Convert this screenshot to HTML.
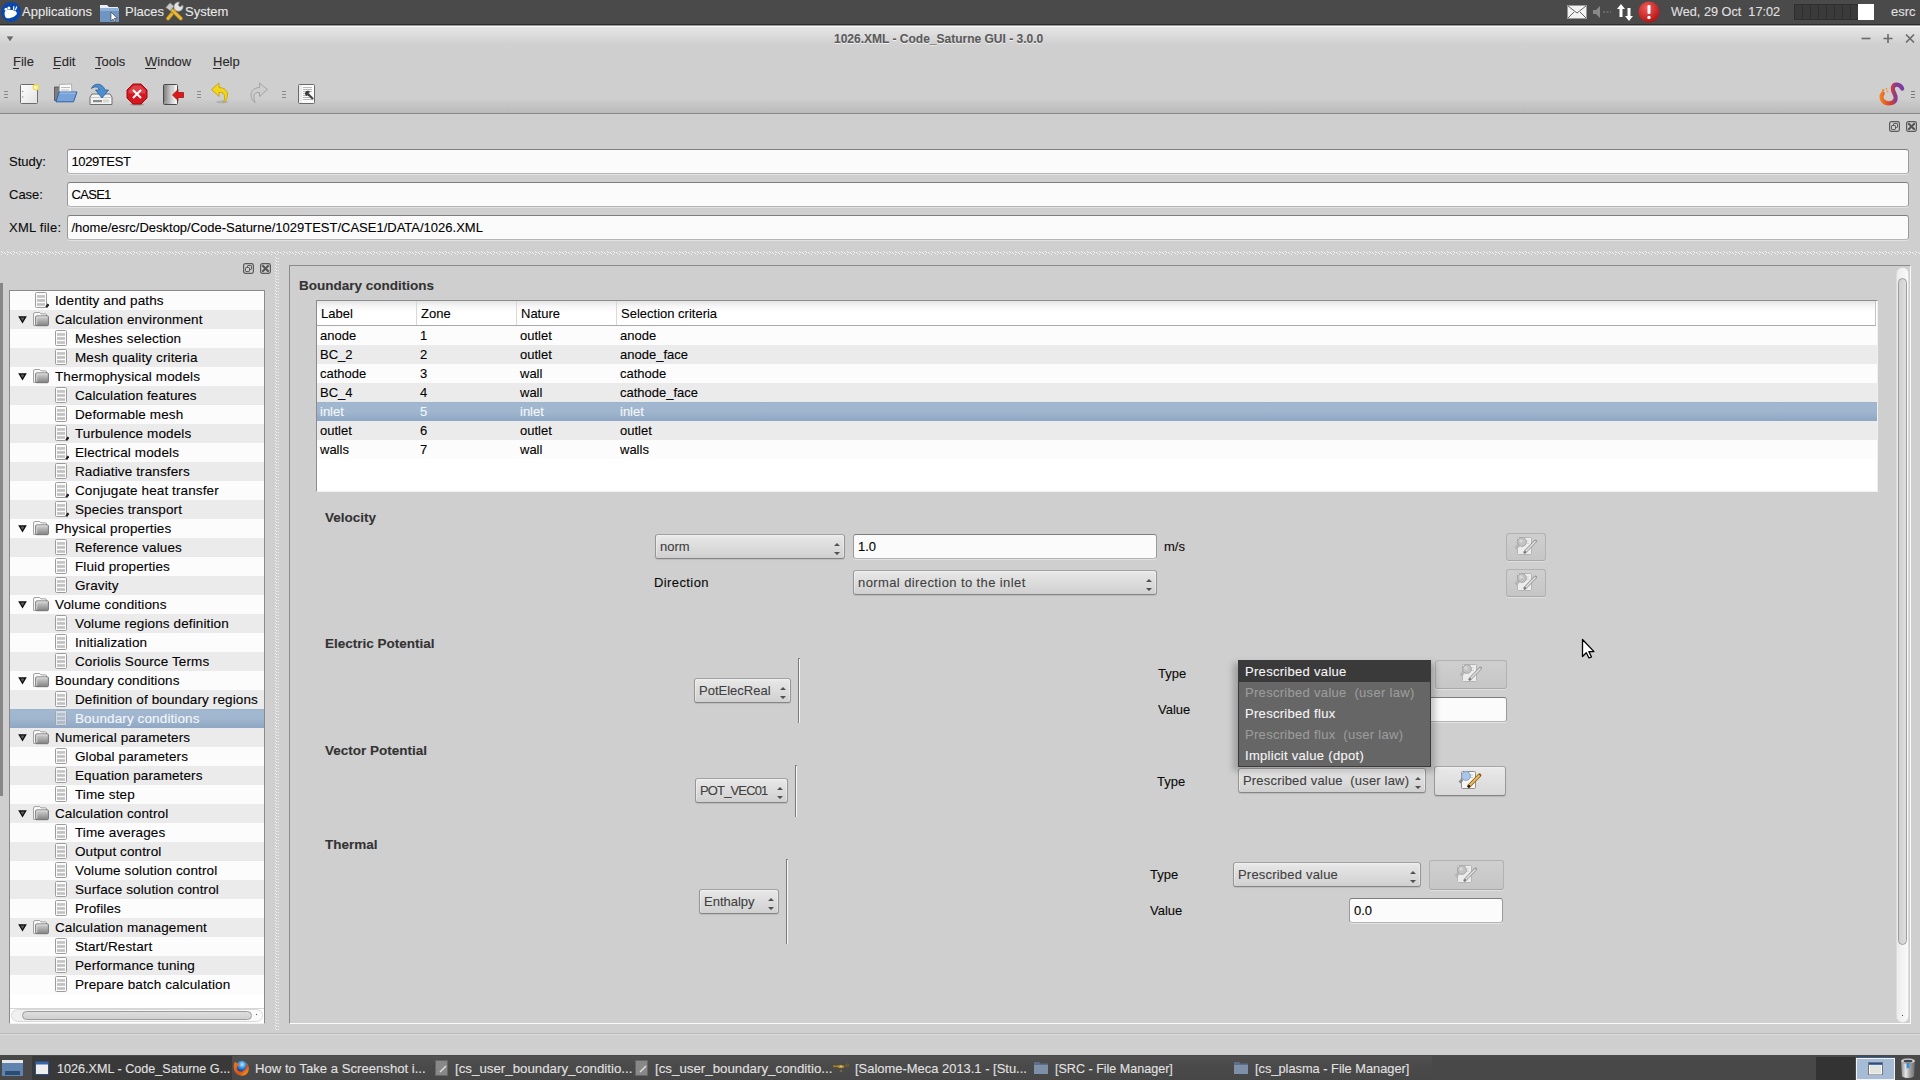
<!DOCTYPE html>
<html><head><meta charset="utf-8"><title>1026.XML - Code_Saturne GUI</title>
<style>
html,body{margin:0;padding:0;}
body{width:1920px;height:1080px;position:relative;overflow:hidden;background:#cfcfcf;font-family:"Liberation Sans",sans-serif;font-size:13px;}
.t{position:absolute;white-space:pre;line-height:1;-webkit-text-stroke:0.1px currentColor;}
svg{display:block;}
</style></head><body>

<div style="position:absolute;left:0px;top:0px;width:1920px;height:24px;background:#4a4a4a;"></div>
<div style="position:absolute;left:0px;top:24px;width:1920px;height:1px;background:#2d2d2d;"></div>
<div style="position:absolute;left:0px;top:25px;width:1920px;height:1px;background:#9a9a9a;"></div>
<div style="position:absolute;left:0px;top:26px;width:1920px;height:1px;background:#fbfbfb;"></div>
<div style="position:absolute;left:0px;top:27px;width:1920px;height:23px;background:linear-gradient(#e6e6e6,#d0d0d0 17px,#cfcfcf);"></div>
<div style="position:absolute;left:0px;top:50px;width:1920px;height:63px;background:linear-gradient(#cfcfcf 0px,#cfcfcf 48px,#c4c4c4 56px,#bababa 63px);"></div>
<div style="position:absolute;left:0px;top:113px;width:1920px;height:1px;background:#8a8a8a;"></div>
<svg style="position:absolute;left:0px;top:0px;" width="23" height="24" viewBox="0 0 23 24"><circle cx="11" cy="11.9" r="10" fill="#0a47ad"/><path d="M4.6 14 C4.4 10.8 6.8 9.6 10 9.8 C13.2 10 17 11.4 16.9 13.2 C16.8 15.6 12 18.3 7.5 18.2 C5.6 18.2 4.7 16.4 4.6 14 Z" fill="#fff"/><circle cx="6" cy="9.2" r="1.5" fill="#fff"/><circle cx="8.9" cy="8" r="1.5" fill="#fff"/><path d="M13.6 10 L13.8 6.2 M15.3 10.2 L16.8 6.6" stroke="#fff" stroke-width="1.2"/></svg>
<div class="t" style="left:22px;top:5.00px;font-size:13px;color:#e8e8e8;">Applications</div>
<svg style="position:absolute;left:98px;top:2px;" width="23" height="21" viewBox="0 0 23 21"><path d="M2 3 h7 l2 2 h9 v15 h-18z" fill="#e9eef4"/><path d="M2 6 h19 v14 h-19z" fill="#6f95c2"/><path d="M2 6 h19 v3 h-19z" fill="#8fb0d6"/><path d="M13 10 v9 l2-2 l1.5 3 l1.2-.6 l-1.5-3 h3z" fill="#fff" stroke="#333" stroke-width=".6"/></svg>
<div class="t" style="left:125px;top:5.00px;font-size:13px;color:#e8e8e8;">Places</div>
<svg style="position:absolute;left:165px;top:1px;" width="19" height="21" viewBox="0 0 19 21"><path d="M3 17.5 L10.5 8.5" stroke="#9a7a18" stroke-width="4.2" stroke-linecap="round"/><path d="M3 17.5 L10.5 8.5" stroke="#e3b23a" stroke-width="2.8" stroke-linecap="round"/><path d="M15.8 17.5 L7.5 9.5" stroke="#9a7a18" stroke-width="4.2" stroke-linecap="round"/><path d="M15.8 17.5 L7.5 9.5" stroke="#e6b83e" stroke-width="2.8" stroke-linecap="round"/><path d="M0.8 6.5 L5 1.8 L9 5.2 L5.5 10z" fill="#c9c9c9" stroke="#7a7a7a" stroke-width=".7"/><path d="M17.8 4 A4.6 4.6 0 1 1 14.5 1.2 L13.2 4 L15 6 z" fill="#e4e4e4" stroke="#8a8a8a" stroke-width=".7"/></svg>
<div class="t" style="left:185px;top:5.00px;font-size:13px;color:#e8e8e8;">System</div>
<svg style="position:absolute;left:1567px;top:5px;" width="20" height="14" viewBox="0 0 20 14"><rect x=".5" y=".5" width="19" height="13" fill="#f2f2f2" stroke="#999"/><path d="M1 1 L10 8 L19 1 M1 13 L7 7 M19 13 L13 7" stroke="#666" fill="none"/></svg>
<svg style="position:absolute;left:1592px;top:5px;" width="19" height="14" viewBox="0 0 19 14"><path d="M1 5 h3 l4-4 v12 l-4-4 h-3z" fill="#888"/><path d="M11 7h2 M14.5 7h2 M18 7h1" stroke="#888"/></svg>
<svg style="position:absolute;left:1616px;top:3px;" width="19" height="19" viewBox="0 0 19 19"><path d="M5 1 L1 6 h2.5 v8 h3 v-8 h2.5z" fill="#fff"/><path d="M13 18 L9 13 h2.5 v-8 h3 v8 h2.5z" fill="#fff"/></svg>
<svg style="position:absolute;left:1638px;top:1px;" width="22" height="22" viewBox="0 0 22 22"><defs><radialGradient id="rg" cx="40%" cy="30%" r="70%"><stop offset="0" stop-color="#f35a5a"/><stop offset="1" stop-color="#b31515"/></radialGradient></defs><circle cx="11" cy="11" r="10.5" fill="url(#rg)"/><rect x="9.5" y="4" width="3" height="9" rx="1" fill="#fff"/><circle cx="11" cy="16.5" r="1.7" fill="#fff"/></svg>
<div class="t" style="left:1671px;top:6.25px;font-size:12.7px;color:#e0e0e0;">Wed, 29 Oct  17:02</div>
<div style="position:absolute;left:1794px;top:4px;width:80px;height:16px;background:#2f2f2f;"></div>
<div style="position:absolute;left:1795px;top:5px;width:7px;height:14px;background:#3a3a3a;"></div>
<div style="position:absolute;left:1803px;top:5px;width:7px;height:14px;background:#3a3a3a;"></div>
<div style="position:absolute;left:1811px;top:5px;width:7px;height:14px;background:#3a3a3a;"></div>
<div style="position:absolute;left:1819px;top:5px;width:7px;height:14px;background:#3a3a3a;"></div>
<div style="position:absolute;left:1827px;top:5px;width:7px;height:14px;background:#3a3a3a;"></div>
<div style="position:absolute;left:1835px;top:5px;width:7px;height:14px;background:#3a3a3a;"></div>
<div style="position:absolute;left:1843px;top:5px;width:7px;height:14px;background:#3a3a3a;"></div>
<div style="position:absolute;left:1851px;top:5px;width:7px;height:14px;background:#3a3a3a;"></div>
<div style="position:absolute;left:1858px;top:4px;width:16px;height:16px;background:#fff;"></div>
<div class="t" style="left:1891px;top:5.00px;font-size:13px;color:#e0e0e0;">esrc</div>
<svg style="position:absolute;left:5px;top:35px;" width="10" height="8" viewBox="0 0 10 8"><path d="M1 1 L9 1 L5 7z" fill="#6a6a6a" stroke="#f4f4f4" stroke-width=".6"/></svg>
<div class="t" style="left:834px;top:32.84px;font-size:12px;color:#5a5a5a;font-weight:bold;text-shadow:0 1px 0 #f2f2f2;">1026.XML - Code_Saturne GUI - 3.0.0</div>
<svg style="position:absolute;left:1860px;top:33px;" width="60" height="12" viewBox="0 0 60 12"><path d="M1.5 5.5h9" stroke="#6a6a6a" stroke-width="1.6"/><path d="M28 1v9 M23.5 5.5h9" stroke="#6a6a6a" stroke-width="1.6"/><path d="M46 1.5l8 8 M54 1.5l-8 8" stroke="#6a6a6a" stroke-width="1.7"/></svg>
<div class="t" style="left:13px;top:55.00px;font-size:13px;color:#2a2a2a;">File</div>
<div style="position:absolute;left:13px;top:68px;width:6px;height:1px;background:#2a2a2a;"></div>
<div class="t" style="left:53px;top:55.00px;font-size:13px;color:#2a2a2a;">Edit</div>
<div style="position:absolute;left:53px;top:68px;width:7px;height:1px;background:#2a2a2a;"></div>
<div class="t" style="left:95px;top:55.00px;font-size:13px;color:#2a2a2a;">Tools</div>
<div style="position:absolute;left:95px;top:68px;width:6px;height:1px;background:#2a2a2a;"></div>
<div class="t" style="left:145px;top:55.00px;font-size:13px;color:#2a2a2a;">Window</div>
<div style="position:absolute;left:145px;top:68px;width:11px;height:1px;background:#2a2a2a;"></div>
<div class="t" style="left:213px;top:55.00px;font-size:13px;color:#2a2a2a;">Help</div>
<div style="position:absolute;left:213px;top:68px;width:8px;height:1px;background:#2a2a2a;"></div>
<div style="position:absolute;left:4px;top:91px;width:4px;height:1px;background:#8a8a8a;"></div>
<div style="position:absolute;left:4px;top:94px;width:4px;height:1px;background:#8a8a8a;"></div>
<div style="position:absolute;left:4px;top:97px;width:4px;height:1px;background:#8a8a8a;"></div>
<div style="position:absolute;left:197px;top:91px;width:4px;height:1px;background:#8a8a8a;"></div>
<div style="position:absolute;left:197px;top:94px;width:4px;height:1px;background:#8a8a8a;"></div>
<div style="position:absolute;left:197px;top:97px;width:4px;height:1px;background:#8a8a8a;"></div>
<div style="position:absolute;left:282px;top:91px;width:4px;height:1px;background:#8a8a8a;"></div>
<div style="position:absolute;left:282px;top:94px;width:4px;height:1px;background:#8a8a8a;"></div>
<div style="position:absolute;left:282px;top:97px;width:4px;height:1px;background:#8a8a8a;"></div>
<svg style="position:absolute;left:19px;top:83px;" width="22" height="22" viewBox="0 0 22 22"><defs><linearGradient id="nd" x1="0" y1="0" x2="1" y2="1"><stop offset="0" stop-color="#ffffff"/><stop offset="1" stop-color="#e2e2e2"/></linearGradient></defs><rect x="1.5" y="1.5" width="17" height="19" rx="1" fill="url(#nd)" stroke="#6c6c6c" stroke-width="1"/><circle cx="3.7" cy="8.5" r=".7" fill="#888"/><circle cx="3.7" cy="13.9" r=".7" fill="#888"/><circle cx="16.8" cy="4.3" r="2.6" fill="#fbf3c0" stroke="#eedd55" stroke-width="1.4"/></svg>
<svg style="position:absolute;left:53px;top:82px;" width="25" height="22" viewBox="0 0 25 22"><path d="M1.5 5 h6 l1.5 -1.5 h7 v15 h-14.5z" fill="#7d7d7d" stroke="#4e4e4e" stroke-width=".8"/><path d="M6.5 2.5 l12 -.5 l0.5 11 h-13z" fill="#fafafa" stroke="#9a9a9a" stroke-width=".7"/><path d="M8 5.5 h9 M8 8 h8" stroke="#bbb" stroke-width="1"/><path d="M6 10 h18 l-3.5 9.8 h-17.5z" fill="#78a3d8" stroke="#2f5fa6" stroke-width="1"/><path d="M6.8 11 h16" stroke="#a9c6ec" stroke-width="1"/></svg>
<svg style="position:absolute;left:89px;top:82px;" width="24" height="24" viewBox="0 0 24 24"><path d="M3 12 h18 l2 3 v7.5 h-22 v-7.5z" fill="#f3f3f3" stroke="#6e6e6e" stroke-width="1"/><path d="M1.5 15.5 h21" stroke="#c8c8c8"/><rect x="4" y="18" width="9" height="2.2" fill="#8a8a8a"/><path d="M15 17.5 v3 M17 17.5 v3 M19 17.5 v3" stroke="#aaa" stroke-width=".8"/><path d="M2.5 6.5 C4 1 13.5 0 16 8 h3.5 l-6.5 8 l-6.5-8 h3.5 C10 4.5 6 4 2.5 6.5z" fill="#4a8fd0" stroke="#2a5f9a" stroke-width=".8"/></svg>
<svg style="position:absolute;left:126px;top:83px;" width="22" height="23" viewBox="0 0 22 23"><ellipse cx="11" cy="21.3" rx="7" ry="1.2" fill="rgba(0,0,0,.25)"/><path d="M7 1 h8 l6 6 v8 l-6 6 h-8 l-6 -6 v-8z" fill="#d51722" stroke="#a00b12" stroke-width="1"/><path d="M7.5 2.5 h7 l5 5 v3 h-17 v-3z" fill="rgba(255,255,255,.18)"/><path d="M7 7 l8 8 M15 7 l-8 8" stroke="#fff" stroke-width="2"/></svg>
<svg style="position:absolute;left:162px;top:83px;" width="24" height="23" viewBox="0 0 24 23"><defs><linearGradient id="qd" x1="0" y1="0" x2="1" y2="0"><stop offset="0" stop-color="#7a7a7a"/><stop offset=".6" stop-color="#d6d6d6"/><stop offset="1" stop-color="#ffffff"/></linearGradient></defs><rect x="1.5" y="1.5" width="14" height="20" rx="1" fill="url(#qd)" stroke="#4a4a4a" stroke-width="1"/><path d="M11 2 v8 M2 20 L10 16" stroke="#bbb" stroke-width=".8"/><path d="M10.5 12 L16 6.5 v3 h5.5 v5 h-5.5 v3z" fill="#dc1a1a" stroke="#9a0808" stroke-width=".7"/></svg>
<svg style="position:absolute;left:210px;top:82px;" width="21" height="23" viewBox="0 0 21 23"><ellipse cx="12" cy="20" rx="6" ry="1.5" fill="rgba(0,0,0,.12)"/><path d="M9 1 L1.5 7.5 L9 14.5 V10.5 C13 10 16.5 12 13.5 20.5 C19 17 20 6 9 5.5z" fill="#f3d51c" stroke="#c4a10a" stroke-width=".9"/></svg>
<svg style="position:absolute;left:249px;top:82px;" width="20" height="23" viewBox="0 0 20 23"><path d="M10.5 1 L18.5 7.5 L10.5 14.5 V10.5 C6.5 10 3 12 6 20.5 C0.5 17 -.5 6 10.5 5.5z" fill="#cdcdcd" stroke="#9e9e9e" stroke-width=".9"/></svg>
<svg style="position:absolute;left:297px;top:83px;" width="20" height="22" viewBox="0 0 20 22"><rect x="1.5" y="1.5" width="16" height="19" rx="1" fill="#fbfbfb" stroke="#6a6a6a" stroke-width="1"/><rect x="2" y="2" width="3" height="18" fill="#ececec"/><path d="M6 4.5 h9 M6 6.5 h9 M6 8.5 h9 M6 10.5 h3 M6 12.5 h3 M6 14.5 h9 M6 16.5 h9" stroke="#a8a8a8" stroke-width=".8"/><path d="M11.5 11.5 L15.5 15.5" stroke="#444" stroke-width="2.2" stroke-linecap="round"/><path d="M9.5 13 a2.8 2.8 0 1 1 3.8 -3.8 l-1.8 .5 l.2 1.3 l1.3 .2z" fill="#3a3a3a"/></svg>
<svg style="position:absolute;left:1876px;top:80px;" width="30" height="28" viewBox="0 0 30 28"><defs><linearGradient id="sat" x1="4" y1="0" x2="27" y2="0" gradientUnits="userSpaceOnUse"><stop offset="0" stop-color="#f58220"/><stop offset=".45" stop-color="#d8402c"/><stop offset=".7" stop-color="#8a3a8e"/><stop offset="1" stop-color="#7d3aa8"/></linearGradient></defs><path d="M26.2 8.5 C24 3.5 17.5 3.2 16.8 8 C16.3 12 20.5 15 19.6 19 C18.6 23.8 10.5 24.8 7 21 C5 18.6 5.2 15.5 6.8 13.5" stroke="url(#sat)" stroke-width="4.2" fill="none" stroke-linecap="round"/><circle cx="7.2" cy="10.2" r="1.2" fill="#f08a30"/><circle cx="10.5" cy="8.8" r=".9" fill="#f08a30"/><circle cx="11.4" cy="11.5" r=".8" fill="#f08a30"/></svg>
<div style="position:absolute;left:1911px;top:91px;width:4px;height:1px;background:#7a7a7a;"></div>
<div style="position:absolute;left:1911px;top:94px;width:4px;height:1px;background:#7a7a7a;"></div>
<div style="position:absolute;left:1911px;top:97px;width:4px;height:1px;background:#7a7a7a;"></div>
<svg style="position:absolute;left:1889px;top:121px;" width="12" height="12" viewBox="0 0 12 12"><rect x=".6" y=".6" width="9.8" height="9.8" rx="1.8" fill="none" stroke="#5a5a5a" stroke-width="1.2"/><rect x="4.5" y="2.5" width="4" height="4" rx=".6" fill="none" stroke="#5a5a5a" stroke-width="1"/><rect x="2.5" y="4.5" width="4" height="4" rx=".6" fill="#cfcfcf" stroke="#5a5a5a" stroke-width="1"/></svg>
<svg style="position:absolute;left:1906px;top:121px;" width="12" height="12" viewBox="0 0 12 12"><rect x=".6" y=".6" width="9.8" height="9.8" rx="1.8" fill="none" stroke="#5a5a5a" stroke-width="1.2"/><path d="M3 3 L8 8 M8 3 L3 8" stroke="#555" stroke-width="2.1" stroke-linecap="square"/></svg>
<div class="t" style="left:9px;top:155.00px;font-size:13px;color:#0a0a0a;">Study:</div>
<div style="position:absolute;left:67px;top:149px;width:1842px;height:25px;box-sizing:border-box;background:#fbfbfb;border:1px solid #9a9a9a;border-top-color:#7e7e7e;border-bottom-color:#b4b4b4;border-radius:3px;box-shadow:0 1px 0 #e2e2e2;"></div>
<div class="t" style="left:71.5px;top:155.00px;font-size:13px;color:#000;letter-spacing:-0.4px;">1029TEST</div>
<div class="t" style="left:9px;top:188.00px;font-size:13px;color:#0a0a0a;">Case:</div>
<div style="position:absolute;left:67px;top:182px;width:1842px;height:25px;box-sizing:border-box;background:#fbfbfb;border:1px solid #9a9a9a;border-top-color:#7e7e7e;border-bottom-color:#b4b4b4;border-radius:3px;box-shadow:0 1px 0 #e2e2e2;"></div>
<div class="t" style="left:71.5px;top:188.00px;font-size:13px;color:#000;letter-spacing:-0.7px;">CASE1</div>
<div class="t" style="left:9px;top:221.00px;font-size:13px;color:#0a0a0a;letter-spacing:0.25px;">XML file:</div>
<div style="position:absolute;left:67px;top:215px;width:1842px;height:25px;box-sizing:border-box;background:#fbfbfb;border:1px solid #9a9a9a;border-top-color:#7e7e7e;border-bottom-color:#b4b4b4;border-radius:3px;box-shadow:0 1px 0 #e2e2e2;"></div>
<div class="t" style="left:71.5px;top:221.00px;font-size:13px;color:#000;">/home/esrc/Desktop/Code-Saturne/1029TEST/CASE1/DATA/1026.XML</div>
<svg style="position:absolute;left:0;top:251px" width="1920" height="4"><defs><pattern id="dh" x="0" y="0" width="6" height="4" patternUnits="userSpaceOnUse"><rect x="1" y="0" width="1" height="1" fill="#f2f2f2"/><rect x="2" y="1" width="1" height="1" fill="#f2f2f2"/><rect x="4" y="1" width="1" height="1" fill="#f2f2f2"/><rect x="5" y="2" width="1" height="1" fill="#f2f2f2"/><rect x="1" y="3" width="1" height="1" fill="#f2f2f2"/></pattern></defs><rect width="1920" height="4" fill="url(#dh)"/></svg>
<svg style="position:absolute;left:274px;top:257px" width="6" height="774"><defs><pattern id="dv" x="0" y="0" width="6" height="3" patternUnits="userSpaceOnUse"><rect x="1" y="0" width="1" height="1" fill="#f2f2f2"/><rect x="2" y="1" width="1" height="1" fill="#f2f2f2"/><rect x="4" y="1" width="1" height="1" fill="#f2f2f2"/></pattern></defs><rect width="6" height="774" fill="url(#dv)"/></svg>
<svg style="position:absolute;left:243px;top:263px;" width="12" height="12" viewBox="0 0 12 12"><rect x=".6" y=".6" width="9.8" height="9.8" rx="1.8" fill="none" stroke="#5a5a5a" stroke-width="1.2"/><rect x="4.5" y="2.5" width="4" height="4" rx=".6" fill="none" stroke="#5a5a5a" stroke-width="1"/><rect x="2.5" y="4.5" width="4" height="4" rx=".6" fill="#cfcfcf" stroke="#5a5a5a" stroke-width="1"/></svg>
<svg style="position:absolute;left:260px;top:263px;" width="12" height="12" viewBox="0 0 12 12"><rect x=".6" y=".6" width="9.8" height="9.8" rx="1.8" fill="none" stroke="#5a5a5a" stroke-width="1.2"/><path d="M3 3 L8 8 M8 3 L3 8" stroke="#555" stroke-width="2.1" stroke-linecap="square"/></svg>
<div style="position:absolute;left:0px;top:283px;width:3px;height:513px;background:#878787;"></div>
<div style="position:absolute;left:9px;top:290px;width:256px;height:734px;box-sizing:border-box;border:1px solid #8a8a8a;border-bottom-color:#f0f0f0;background:#fff;"></div>
<div style="position:absolute;left:10px;top:291px;width:254px;height:19px;background:#fcfcfc;"></div>
<svg style="position:absolute;left:35px;top:292px;" width="14" height="17" viewBox="0 0 14 17"><rect x=".5" y=".5" width="11" height="15" rx="1" fill="#fbfbfb" stroke="#9c9c9c"/><rect x="2" y="3.1" width="8" height="2.7" fill="#c4c4c4"/><rect x="2" y="7.1" width="8" height="2.7" fill="#c0c0c0"/><rect x="2" y="11.2" width="8" height="2.6" fill="#c0c0c0"/><path d="M11.2 15.4 L13.4 12.2" stroke="#222" stroke-width="2.2"/></svg>
<div class="t" style="left:55px;top:293.57px;font-size:13.5px;color:#000;letter-spacing:0.12px;">Identity and paths</div>
<div style="position:absolute;left:10px;top:310px;width:254px;height:19px;background:#ebebeb;"></div>
<svg style="position:absolute;left:18px;top:316px;" width="9" height="8" viewBox="0 0 9 8"><path d="M0.2 0.2 h8.6 L4.5 7.4z" fill="#0a0a0a"/><path d="M2.4 1.6 h4.2 L4.5 5.3z" fill="#5a5a5a"/></svg>
<svg style="position:absolute;left:33px;top:312px;" width="17" height="16" viewBox="0 0 17 16"><defs><linearGradient id="fg1" x1="0" y1="0" x2="0" y2="1"><stop offset="0" stop-color="#d6d6d6"/><stop offset="1" stop-color="#828282"/></linearGradient></defs><path d="M0.6 13.4 V2 Q0.6 0.6 2 0.6 H6.8 L8 1.9 H12.4 Q13.5 1.9 13.5 3 V13.4 Z" fill="#fff" stroke="#9c9c9c" stroke-width="1"/><rect x="2.7" y="3.9" width="12.7" height="9.8" rx="1" fill="url(#fg1)" stroke="#767676" stroke-width="1"/><path d="M3.8 12.6 V5 H14.3" stroke="#dadada" stroke-width="1" fill="none"/></svg>
<div class="t" style="left:55px;top:312.57px;font-size:13.5px;color:#000;letter-spacing:0.12px;">Calculation environment</div>
<div style="position:absolute;left:10px;top:329px;width:254px;height:19px;background:#fcfcfc;"></div>
<svg style="position:absolute;left:55px;top:330px;" width="14" height="17" viewBox="0 0 14 17"><rect x=".5" y=".5" width="11" height="15" rx="1" fill="#fbfbfb" stroke="#9c9c9c"/><rect x="2" y="3.1" width="8" height="2.7" fill="#c4c4c4"/><rect x="2" y="7.1" width="8" height="2.7" fill="#c0c0c0"/><rect x="2" y="11.2" width="8" height="2.6" fill="#c0c0c0"/></svg>
<div class="t" style="left:75px;top:331.57px;font-size:13.5px;color:#000;letter-spacing:0.12px;">Meshes selection</div>
<div style="position:absolute;left:10px;top:348px;width:254px;height:19px;background:#ebebeb;"></div>
<svg style="position:absolute;left:55px;top:349px;" width="14" height="17" viewBox="0 0 14 17"><rect x=".5" y=".5" width="11" height="15" rx="1" fill="#fbfbfb" stroke="#9c9c9c"/><rect x="2" y="3.1" width="8" height="2.7" fill="#c4c4c4"/><rect x="2" y="7.1" width="8" height="2.7" fill="#c0c0c0"/><rect x="2" y="11.2" width="8" height="2.6" fill="#c0c0c0"/></svg>
<div class="t" style="left:75px;top:350.57px;font-size:13.5px;color:#000;letter-spacing:0.12px;">Mesh quality criteria</div>
<div style="position:absolute;left:10px;top:367px;width:254px;height:19px;background:#fcfcfc;"></div>
<svg style="position:absolute;left:18px;top:373px;" width="9" height="8" viewBox="0 0 9 8"><path d="M0.2 0.2 h8.6 L4.5 7.4z" fill="#0a0a0a"/><path d="M2.4 1.6 h4.2 L4.5 5.3z" fill="#5a5a5a"/></svg>
<svg style="position:absolute;left:33px;top:369px;" width="17" height="16" viewBox="0 0 17 16"><defs><linearGradient id="fg4" x1="0" y1="0" x2="0" y2="1"><stop offset="0" stop-color="#d6d6d6"/><stop offset="1" stop-color="#828282"/></linearGradient></defs><path d="M0.6 13.4 V2 Q0.6 0.6 2 0.6 H6.8 L8 1.9 H12.4 Q13.5 1.9 13.5 3 V13.4 Z" fill="#fff" stroke="#9c9c9c" stroke-width="1"/><rect x="2.7" y="3.9" width="12.7" height="9.8" rx="1" fill="url(#fg4)" stroke="#767676" stroke-width="1"/><path d="M3.8 12.6 V5 H14.3" stroke="#dadada" stroke-width="1" fill="none"/></svg>
<div class="t" style="left:55px;top:369.57px;font-size:13.5px;color:#000;letter-spacing:0.12px;">Thermophysical models</div>
<div style="position:absolute;left:10px;top:386px;width:254px;height:19px;background:#ebebeb;"></div>
<svg style="position:absolute;left:55px;top:387px;" width="14" height="17" viewBox="0 0 14 17"><rect x=".5" y=".5" width="11" height="15" rx="1" fill="#fbfbfb" stroke="#9c9c9c"/><rect x="2" y="3.1" width="8" height="2.7" fill="#c4c4c4"/><rect x="2" y="7.1" width="8" height="2.7" fill="#c0c0c0"/><rect x="2" y="11.2" width="8" height="2.6" fill="#c0c0c0"/></svg>
<div class="t" style="left:75px;top:388.57px;font-size:13.5px;color:#000;letter-spacing:0.12px;">Calculation features</div>
<div style="position:absolute;left:10px;top:405px;width:254px;height:19px;background:#fcfcfc;"></div>
<svg style="position:absolute;left:55px;top:406px;" width="14" height="17" viewBox="0 0 14 17"><rect x=".5" y=".5" width="11" height="15" rx="1" fill="#fbfbfb" stroke="#9c9c9c"/><rect x="2" y="3.1" width="8" height="2.7" fill="#c4c4c4"/><rect x="2" y="7.1" width="8" height="2.7" fill="#c0c0c0"/><rect x="2" y="11.2" width="8" height="2.6" fill="#c0c0c0"/></svg>
<div class="t" style="left:75px;top:407.57px;font-size:13.5px;color:#000;letter-spacing:0.12px;">Deformable mesh</div>
<div style="position:absolute;left:10px;top:424px;width:254px;height:19px;background:#ebebeb;"></div>
<svg style="position:absolute;left:55px;top:425px;" width="14" height="17" viewBox="0 0 14 17"><rect x=".5" y=".5" width="11" height="15" rx="1" fill="#fbfbfb" stroke="#9c9c9c"/><rect x="2" y="3.1" width="8" height="2.7" fill="#c4c4c4"/><rect x="2" y="7.1" width="8" height="2.7" fill="#c0c0c0"/><rect x="2" y="11.2" width="8" height="2.6" fill="#c0c0c0"/><path d="M11.2 15.4 L13.4 12.2" stroke="#222" stroke-width="2.2"/></svg>
<div class="t" style="left:75px;top:426.57px;font-size:13.5px;color:#000;letter-spacing:0.12px;">Turbulence models</div>
<div style="position:absolute;left:10px;top:443px;width:254px;height:19px;background:#fcfcfc;"></div>
<svg style="position:absolute;left:55px;top:444px;" width="14" height="17" viewBox="0 0 14 17"><rect x=".5" y=".5" width="11" height="15" rx="1" fill="#fbfbfb" stroke="#9c9c9c"/><rect x="2" y="3.1" width="8" height="2.7" fill="#c4c4c4"/><rect x="2" y="7.1" width="8" height="2.7" fill="#c0c0c0"/><rect x="2" y="11.2" width="8" height="2.6" fill="#c0c0c0"/><path d="M11.2 15.4 L13.4 12.2" stroke="#222" stroke-width="2.2"/></svg>
<div class="t" style="left:75px;top:445.57px;font-size:13.5px;color:#000;letter-spacing:0.12px;">Electrical models</div>
<div style="position:absolute;left:10px;top:462px;width:254px;height:19px;background:#ebebeb;"></div>
<svg style="position:absolute;left:55px;top:463px;" width="14" height="17" viewBox="0 0 14 17"><rect x=".5" y=".5" width="11" height="15" rx="1" fill="#fbfbfb" stroke="#9c9c9c"/><rect x="2" y="3.1" width="8" height="2.7" fill="#c4c4c4"/><rect x="2" y="7.1" width="8" height="2.7" fill="#c0c0c0"/><rect x="2" y="11.2" width="8" height="2.6" fill="#c0c0c0"/></svg>
<div class="t" style="left:75px;top:464.57px;font-size:13.5px;color:#000;letter-spacing:0.12px;">Radiative transfers</div>
<div style="position:absolute;left:10px;top:481px;width:254px;height:19px;background:#fcfcfc;"></div>
<svg style="position:absolute;left:55px;top:482px;" width="14" height="17" viewBox="0 0 14 17"><rect x=".5" y=".5" width="11" height="15" rx="1" fill="#fbfbfb" stroke="#9c9c9c"/><rect x="2" y="3.1" width="8" height="2.7" fill="#c4c4c4"/><rect x="2" y="7.1" width="8" height="2.7" fill="#c0c0c0"/><rect x="2" y="11.2" width="8" height="2.6" fill="#c0c0c0"/><path d="M11.2 15.4 L13.4 12.2" stroke="#222" stroke-width="2.2"/></svg>
<div class="t" style="left:75px;top:483.57px;font-size:13.5px;color:#000;letter-spacing:0.12px;">Conjugate heat transfer</div>
<div style="position:absolute;left:10px;top:500px;width:254px;height:19px;background:#ebebeb;"></div>
<svg style="position:absolute;left:55px;top:501px;" width="14" height="17" viewBox="0 0 14 17"><rect x=".5" y=".5" width="11" height="15" rx="1" fill="#fbfbfb" stroke="#9c9c9c"/><rect x="2" y="3.1" width="8" height="2.7" fill="#c4c4c4"/><rect x="2" y="7.1" width="8" height="2.7" fill="#c0c0c0"/><rect x="2" y="11.2" width="8" height="2.6" fill="#c0c0c0"/><path d="M11.2 15.4 L13.4 12.2" stroke="#222" stroke-width="2.2"/></svg>
<div class="t" style="left:75px;top:502.57px;font-size:13.5px;color:#000;letter-spacing:0.12px;">Species transport</div>
<div style="position:absolute;left:10px;top:519px;width:254px;height:19px;background:#fcfcfc;"></div>
<svg style="position:absolute;left:18px;top:525px;" width="9" height="8" viewBox="0 0 9 8"><path d="M0.2 0.2 h8.6 L4.5 7.4z" fill="#0a0a0a"/><path d="M2.4 1.6 h4.2 L4.5 5.3z" fill="#5a5a5a"/></svg>
<svg style="position:absolute;left:33px;top:521px;" width="17" height="16" viewBox="0 0 17 16"><defs><linearGradient id="fg12" x1="0" y1="0" x2="0" y2="1"><stop offset="0" stop-color="#d6d6d6"/><stop offset="1" stop-color="#828282"/></linearGradient></defs><path d="M0.6 13.4 V2 Q0.6 0.6 2 0.6 H6.8 L8 1.9 H12.4 Q13.5 1.9 13.5 3 V13.4 Z" fill="#fff" stroke="#9c9c9c" stroke-width="1"/><rect x="2.7" y="3.9" width="12.7" height="9.8" rx="1" fill="url(#fg12)" stroke="#767676" stroke-width="1"/><path d="M3.8 12.6 V5 H14.3" stroke="#dadada" stroke-width="1" fill="none"/></svg>
<div class="t" style="left:55px;top:521.57px;font-size:13.5px;color:#000;letter-spacing:0.12px;">Physical properties</div>
<div style="position:absolute;left:10px;top:538px;width:254px;height:19px;background:#ebebeb;"></div>
<svg style="position:absolute;left:55px;top:539px;" width="14" height="17" viewBox="0 0 14 17"><rect x=".5" y=".5" width="11" height="15" rx="1" fill="#fbfbfb" stroke="#9c9c9c"/><rect x="2" y="3.1" width="8" height="2.7" fill="#c4c4c4"/><rect x="2" y="7.1" width="8" height="2.7" fill="#c0c0c0"/><rect x="2" y="11.2" width="8" height="2.6" fill="#c0c0c0"/></svg>
<div class="t" style="left:75px;top:540.57px;font-size:13.5px;color:#000;letter-spacing:0.12px;">Reference values</div>
<div style="position:absolute;left:10px;top:557px;width:254px;height:19px;background:#fcfcfc;"></div>
<svg style="position:absolute;left:55px;top:558px;" width="14" height="17" viewBox="0 0 14 17"><rect x=".5" y=".5" width="11" height="15" rx="1" fill="#fbfbfb" stroke="#9c9c9c"/><rect x="2" y="3.1" width="8" height="2.7" fill="#c4c4c4"/><rect x="2" y="7.1" width="8" height="2.7" fill="#c0c0c0"/><rect x="2" y="11.2" width="8" height="2.6" fill="#c0c0c0"/></svg>
<div class="t" style="left:75px;top:559.57px;font-size:13.5px;color:#000;letter-spacing:0.12px;">Fluid properties</div>
<div style="position:absolute;left:10px;top:576px;width:254px;height:19px;background:#ebebeb;"></div>
<svg style="position:absolute;left:55px;top:577px;" width="14" height="17" viewBox="0 0 14 17"><rect x=".5" y=".5" width="11" height="15" rx="1" fill="#fbfbfb" stroke="#9c9c9c"/><rect x="2" y="3.1" width="8" height="2.7" fill="#c4c4c4"/><rect x="2" y="7.1" width="8" height="2.7" fill="#c0c0c0"/><rect x="2" y="11.2" width="8" height="2.6" fill="#c0c0c0"/></svg>
<div class="t" style="left:75px;top:578.57px;font-size:13.5px;color:#000;letter-spacing:0.12px;">Gravity</div>
<div style="position:absolute;left:10px;top:595px;width:254px;height:19px;background:#fcfcfc;"></div>
<svg style="position:absolute;left:18px;top:601px;" width="9" height="8" viewBox="0 0 9 8"><path d="M0.2 0.2 h8.6 L4.5 7.4z" fill="#0a0a0a"/><path d="M2.4 1.6 h4.2 L4.5 5.3z" fill="#5a5a5a"/></svg>
<svg style="position:absolute;left:33px;top:597px;" width="17" height="16" viewBox="0 0 17 16"><defs><linearGradient id="fg16" x1="0" y1="0" x2="0" y2="1"><stop offset="0" stop-color="#d6d6d6"/><stop offset="1" stop-color="#828282"/></linearGradient></defs><path d="M0.6 13.4 V2 Q0.6 0.6 2 0.6 H6.8 L8 1.9 H12.4 Q13.5 1.9 13.5 3 V13.4 Z" fill="#fff" stroke="#9c9c9c" stroke-width="1"/><rect x="2.7" y="3.9" width="12.7" height="9.8" rx="1" fill="url(#fg16)" stroke="#767676" stroke-width="1"/><path d="M3.8 12.6 V5 H14.3" stroke="#dadada" stroke-width="1" fill="none"/></svg>
<div class="t" style="left:55px;top:597.57px;font-size:13.5px;color:#000;letter-spacing:0.12px;">Volume conditions</div>
<div style="position:absolute;left:10px;top:614px;width:254px;height:19px;background:#ebebeb;"></div>
<svg style="position:absolute;left:55px;top:615px;" width="14" height="17" viewBox="0 0 14 17"><rect x=".5" y=".5" width="11" height="15" rx="1" fill="#fbfbfb" stroke="#9c9c9c"/><rect x="2" y="3.1" width="8" height="2.7" fill="#c4c4c4"/><rect x="2" y="7.1" width="8" height="2.7" fill="#c0c0c0"/><rect x="2" y="11.2" width="8" height="2.6" fill="#c0c0c0"/></svg>
<div class="t" style="left:75px;top:616.57px;font-size:13.5px;color:#000;letter-spacing:0.12px;">Volume regions definition</div>
<div style="position:absolute;left:10px;top:633px;width:254px;height:19px;background:#fcfcfc;"></div>
<svg style="position:absolute;left:55px;top:634px;" width="14" height="17" viewBox="0 0 14 17"><rect x=".5" y=".5" width="11" height="15" rx="1" fill="#fbfbfb" stroke="#9c9c9c"/><rect x="2" y="3.1" width="8" height="2.7" fill="#c4c4c4"/><rect x="2" y="7.1" width="8" height="2.7" fill="#c0c0c0"/><rect x="2" y="11.2" width="8" height="2.6" fill="#c0c0c0"/></svg>
<div class="t" style="left:75px;top:635.57px;font-size:13.5px;color:#000;letter-spacing:0.12px;">Initialization</div>
<div style="position:absolute;left:10px;top:652px;width:254px;height:19px;background:#ebebeb;"></div>
<svg style="position:absolute;left:55px;top:653px;" width="14" height="17" viewBox="0 0 14 17"><rect x=".5" y=".5" width="11" height="15" rx="1" fill="#fbfbfb" stroke="#9c9c9c"/><rect x="2" y="3.1" width="8" height="2.7" fill="#c4c4c4"/><rect x="2" y="7.1" width="8" height="2.7" fill="#c0c0c0"/><rect x="2" y="11.2" width="8" height="2.6" fill="#c0c0c0"/></svg>
<div class="t" style="left:75px;top:654.57px;font-size:13.5px;color:#000;letter-spacing:0.12px;">Coriolis Source Terms</div>
<div style="position:absolute;left:10px;top:671px;width:254px;height:19px;background:#fcfcfc;"></div>
<svg style="position:absolute;left:18px;top:677px;" width="9" height="8" viewBox="0 0 9 8"><path d="M0.2 0.2 h8.6 L4.5 7.4z" fill="#0a0a0a"/><path d="M2.4 1.6 h4.2 L4.5 5.3z" fill="#5a5a5a"/></svg>
<svg style="position:absolute;left:33px;top:673px;" width="17" height="16" viewBox="0 0 17 16"><defs><linearGradient id="fg20" x1="0" y1="0" x2="0" y2="1"><stop offset="0" stop-color="#d6d6d6"/><stop offset="1" stop-color="#828282"/></linearGradient></defs><path d="M0.6 13.4 V2 Q0.6 0.6 2 0.6 H6.8 L8 1.9 H12.4 Q13.5 1.9 13.5 3 V13.4 Z" fill="#fff" stroke="#9c9c9c" stroke-width="1"/><rect x="2.7" y="3.9" width="12.7" height="9.8" rx="1" fill="url(#fg20)" stroke="#767676" stroke-width="1"/><path d="M3.8 12.6 V5 H14.3" stroke="#dadada" stroke-width="1" fill="none"/></svg>
<div class="t" style="left:55px;top:673.57px;font-size:13.5px;color:#000;letter-spacing:0.12px;">Boundary conditions</div>
<div style="position:absolute;left:10px;top:690px;width:254px;height:19px;background:#ebebeb;"></div>
<svg style="position:absolute;left:55px;top:691px;" width="14" height="17" viewBox="0 0 14 17"><rect x=".5" y=".5" width="11" height="15" rx="1" fill="#fbfbfb" stroke="#9c9c9c"/><rect x="2" y="3.1" width="8" height="2.7" fill="#c4c4c4"/><rect x="2" y="7.1" width="8" height="2.7" fill="#c0c0c0"/><rect x="2" y="11.2" width="8" height="2.6" fill="#c0c0c0"/></svg>
<div class="t" style="left:75px;top:692.57px;font-size:13.5px;color:#000;letter-spacing:0.12px;">Definition of boundary regions</div>
<div style="position:absolute;left:10px;top:709px;width:254px;height:19px;background:linear-gradient(#97afca 0px,#a2b8d0 1px,#a0b6ce 50%,#8ea7c4 100%);"></div>
<svg style="position:absolute;left:55px;top:710px;opacity:.55;" width="14" height="17" viewBox="0 0 14 17"><rect x=".5" y=".5" width="11" height="15" rx="1" fill="#fbfbfb" stroke="#9c9c9c"/><rect x="2" y="3.1" width="8" height="2.7" fill="#c4c4c4"/><rect x="2" y="7.1" width="8" height="2.7" fill="#c0c0c0"/><rect x="2" y="11.2" width="8" height="2.6" fill="#c0c0c0"/></svg>
<div class="t" style="left:75px;top:711.57px;font-size:13.5px;color:#f4f7fa;letter-spacing:0.12px;">Boundary conditions</div>
<div style="position:absolute;left:10px;top:728px;width:254px;height:19px;background:#ebebeb;"></div>
<svg style="position:absolute;left:18px;top:734px;" width="9" height="8" viewBox="0 0 9 8"><path d="M0.2 0.2 h8.6 L4.5 7.4z" fill="#0a0a0a"/><path d="M2.4 1.6 h4.2 L4.5 5.3z" fill="#5a5a5a"/></svg>
<svg style="position:absolute;left:33px;top:730px;" width="17" height="16" viewBox="0 0 17 16"><defs><linearGradient id="fg23" x1="0" y1="0" x2="0" y2="1"><stop offset="0" stop-color="#d6d6d6"/><stop offset="1" stop-color="#828282"/></linearGradient></defs><path d="M0.6 13.4 V2 Q0.6 0.6 2 0.6 H6.8 L8 1.9 H12.4 Q13.5 1.9 13.5 3 V13.4 Z" fill="#fff" stroke="#9c9c9c" stroke-width="1"/><rect x="2.7" y="3.9" width="12.7" height="9.8" rx="1" fill="url(#fg23)" stroke="#767676" stroke-width="1"/><path d="M3.8 12.6 V5 H14.3" stroke="#dadada" stroke-width="1" fill="none"/></svg>
<div class="t" style="left:55px;top:730.57px;font-size:13.5px;color:#000;letter-spacing:0.12px;">Numerical parameters</div>
<div style="position:absolute;left:10px;top:747px;width:254px;height:19px;background:#fcfcfc;"></div>
<svg style="position:absolute;left:55px;top:748px;" width="14" height="17" viewBox="0 0 14 17"><rect x=".5" y=".5" width="11" height="15" rx="1" fill="#fbfbfb" stroke="#9c9c9c"/><rect x="2" y="3.1" width="8" height="2.7" fill="#c4c4c4"/><rect x="2" y="7.1" width="8" height="2.7" fill="#c0c0c0"/><rect x="2" y="11.2" width="8" height="2.6" fill="#c0c0c0"/></svg>
<div class="t" style="left:75px;top:749.57px;font-size:13.5px;color:#000;letter-spacing:0.12px;">Global parameters</div>
<div style="position:absolute;left:10px;top:766px;width:254px;height:19px;background:#ebebeb;"></div>
<svg style="position:absolute;left:55px;top:767px;" width="14" height="17" viewBox="0 0 14 17"><rect x=".5" y=".5" width="11" height="15" rx="1" fill="#fbfbfb" stroke="#9c9c9c"/><rect x="2" y="3.1" width="8" height="2.7" fill="#c4c4c4"/><rect x="2" y="7.1" width="8" height="2.7" fill="#c0c0c0"/><rect x="2" y="11.2" width="8" height="2.6" fill="#c0c0c0"/></svg>
<div class="t" style="left:75px;top:768.57px;font-size:13.5px;color:#000;letter-spacing:0.12px;">Equation parameters</div>
<div style="position:absolute;left:10px;top:785px;width:254px;height:19px;background:#fcfcfc;"></div>
<svg style="position:absolute;left:55px;top:786px;" width="14" height="17" viewBox="0 0 14 17"><rect x=".5" y=".5" width="11" height="15" rx="1" fill="#fbfbfb" stroke="#9c9c9c"/><rect x="2" y="3.1" width="8" height="2.7" fill="#c4c4c4"/><rect x="2" y="7.1" width="8" height="2.7" fill="#c0c0c0"/><rect x="2" y="11.2" width="8" height="2.6" fill="#c0c0c0"/></svg>
<div class="t" style="left:75px;top:787.57px;font-size:13.5px;color:#000;letter-spacing:0.12px;">Time step</div>
<div style="position:absolute;left:10px;top:804px;width:254px;height:19px;background:#ebebeb;"></div>
<svg style="position:absolute;left:18px;top:810px;" width="9" height="8" viewBox="0 0 9 8"><path d="M0.2 0.2 h8.6 L4.5 7.4z" fill="#0a0a0a"/><path d="M2.4 1.6 h4.2 L4.5 5.3z" fill="#5a5a5a"/></svg>
<svg style="position:absolute;left:33px;top:806px;" width="17" height="16" viewBox="0 0 17 16"><defs><linearGradient id="fg27" x1="0" y1="0" x2="0" y2="1"><stop offset="0" stop-color="#d6d6d6"/><stop offset="1" stop-color="#828282"/></linearGradient></defs><path d="M0.6 13.4 V2 Q0.6 0.6 2 0.6 H6.8 L8 1.9 H12.4 Q13.5 1.9 13.5 3 V13.4 Z" fill="#fff" stroke="#9c9c9c" stroke-width="1"/><rect x="2.7" y="3.9" width="12.7" height="9.8" rx="1" fill="url(#fg27)" stroke="#767676" stroke-width="1"/><path d="M3.8 12.6 V5 H14.3" stroke="#dadada" stroke-width="1" fill="none"/></svg>
<div class="t" style="left:55px;top:806.57px;font-size:13.5px;color:#000;letter-spacing:0.12px;">Calculation control</div>
<div style="position:absolute;left:10px;top:823px;width:254px;height:19px;background:#fcfcfc;"></div>
<svg style="position:absolute;left:55px;top:824px;" width="14" height="17" viewBox="0 0 14 17"><rect x=".5" y=".5" width="11" height="15" rx="1" fill="#fbfbfb" stroke="#9c9c9c"/><rect x="2" y="3.1" width="8" height="2.7" fill="#c4c4c4"/><rect x="2" y="7.1" width="8" height="2.7" fill="#c0c0c0"/><rect x="2" y="11.2" width="8" height="2.6" fill="#c0c0c0"/></svg>
<div class="t" style="left:75px;top:825.57px;font-size:13.5px;color:#000;letter-spacing:0.12px;">Time averages</div>
<div style="position:absolute;left:10px;top:842px;width:254px;height:19px;background:#ebebeb;"></div>
<svg style="position:absolute;left:55px;top:843px;" width="14" height="17" viewBox="0 0 14 17"><rect x=".5" y=".5" width="11" height="15" rx="1" fill="#fbfbfb" stroke="#9c9c9c"/><rect x="2" y="3.1" width="8" height="2.7" fill="#c4c4c4"/><rect x="2" y="7.1" width="8" height="2.7" fill="#c0c0c0"/><rect x="2" y="11.2" width="8" height="2.6" fill="#c0c0c0"/></svg>
<div class="t" style="left:75px;top:844.57px;font-size:13.5px;color:#000;letter-spacing:0.12px;">Output control</div>
<div style="position:absolute;left:10px;top:861px;width:254px;height:19px;background:#fcfcfc;"></div>
<svg style="position:absolute;left:55px;top:862px;" width="14" height="17" viewBox="0 0 14 17"><rect x=".5" y=".5" width="11" height="15" rx="1" fill="#fbfbfb" stroke="#9c9c9c"/><rect x="2" y="3.1" width="8" height="2.7" fill="#c4c4c4"/><rect x="2" y="7.1" width="8" height="2.7" fill="#c0c0c0"/><rect x="2" y="11.2" width="8" height="2.6" fill="#c0c0c0"/></svg>
<div class="t" style="left:75px;top:863.57px;font-size:13.5px;color:#000;letter-spacing:0.12px;">Volume solution control</div>
<div style="position:absolute;left:10px;top:880px;width:254px;height:19px;background:#ebebeb;"></div>
<svg style="position:absolute;left:55px;top:881px;" width="14" height="17" viewBox="0 0 14 17"><rect x=".5" y=".5" width="11" height="15" rx="1" fill="#fbfbfb" stroke="#9c9c9c"/><rect x="2" y="3.1" width="8" height="2.7" fill="#c4c4c4"/><rect x="2" y="7.1" width="8" height="2.7" fill="#c0c0c0"/><rect x="2" y="11.2" width="8" height="2.6" fill="#c0c0c0"/></svg>
<div class="t" style="left:75px;top:882.57px;font-size:13.5px;color:#000;letter-spacing:0.12px;">Surface solution control</div>
<div style="position:absolute;left:10px;top:899px;width:254px;height:19px;background:#fcfcfc;"></div>
<svg style="position:absolute;left:55px;top:900px;" width="14" height="17" viewBox="0 0 14 17"><rect x=".5" y=".5" width="11" height="15" rx="1" fill="#fbfbfb" stroke="#9c9c9c"/><rect x="2" y="3.1" width="8" height="2.7" fill="#c4c4c4"/><rect x="2" y="7.1" width="8" height="2.7" fill="#c0c0c0"/><rect x="2" y="11.2" width="8" height="2.6" fill="#c0c0c0"/></svg>
<div class="t" style="left:75px;top:901.57px;font-size:13.5px;color:#000;letter-spacing:0.12px;">Profiles</div>
<div style="position:absolute;left:10px;top:918px;width:254px;height:19px;background:#ebebeb;"></div>
<svg style="position:absolute;left:18px;top:924px;" width="9" height="8" viewBox="0 0 9 8"><path d="M0.2 0.2 h8.6 L4.5 7.4z" fill="#0a0a0a"/><path d="M2.4 1.6 h4.2 L4.5 5.3z" fill="#5a5a5a"/></svg>
<svg style="position:absolute;left:33px;top:920px;" width="17" height="16" viewBox="0 0 17 16"><defs><linearGradient id="fg33" x1="0" y1="0" x2="0" y2="1"><stop offset="0" stop-color="#d6d6d6"/><stop offset="1" stop-color="#828282"/></linearGradient></defs><path d="M0.6 13.4 V2 Q0.6 0.6 2 0.6 H6.8 L8 1.9 H12.4 Q13.5 1.9 13.5 3 V13.4 Z" fill="#fff" stroke="#9c9c9c" stroke-width="1"/><rect x="2.7" y="3.9" width="12.7" height="9.8" rx="1" fill="url(#fg33)" stroke="#767676" stroke-width="1"/><path d="M3.8 12.6 V5 H14.3" stroke="#dadada" stroke-width="1" fill="none"/></svg>
<div class="t" style="left:55px;top:920.57px;font-size:13.5px;color:#000;letter-spacing:0.12px;">Calculation management</div>
<div style="position:absolute;left:10px;top:937px;width:254px;height:19px;background:#fcfcfc;"></div>
<svg style="position:absolute;left:55px;top:938px;" width="14" height="17" viewBox="0 0 14 17"><rect x=".5" y=".5" width="11" height="15" rx="1" fill="#fbfbfb" stroke="#9c9c9c"/><rect x="2" y="3.1" width="8" height="2.7" fill="#c4c4c4"/><rect x="2" y="7.1" width="8" height="2.7" fill="#c0c0c0"/><rect x="2" y="11.2" width="8" height="2.6" fill="#c0c0c0"/></svg>
<div class="t" style="left:75px;top:939.57px;font-size:13.5px;color:#000;letter-spacing:0.12px;">Start/Restart</div>
<div style="position:absolute;left:10px;top:956px;width:254px;height:19px;background:#ebebeb;"></div>
<svg style="position:absolute;left:55px;top:957px;" width="14" height="17" viewBox="0 0 14 17"><rect x=".5" y=".5" width="11" height="15" rx="1" fill="#fbfbfb" stroke="#9c9c9c"/><rect x="2" y="3.1" width="8" height="2.7" fill="#c4c4c4"/><rect x="2" y="7.1" width="8" height="2.7" fill="#c0c0c0"/><rect x="2" y="11.2" width="8" height="2.6" fill="#c0c0c0"/></svg>
<div class="t" style="left:75px;top:958.57px;font-size:13.5px;color:#000;letter-spacing:0.12px;">Performance tuning</div>
<div style="position:absolute;left:10px;top:975px;width:254px;height:19px;background:#fcfcfc;"></div>
<svg style="position:absolute;left:55px;top:976px;" width="14" height="17" viewBox="0 0 14 17"><rect x=".5" y=".5" width="11" height="15" rx="1" fill="#fbfbfb" stroke="#9c9c9c"/><rect x="2" y="3.1" width="8" height="2.7" fill="#c4c4c4"/><rect x="2" y="7.1" width="8" height="2.7" fill="#c0c0c0"/><rect x="2" y="11.2" width="8" height="2.6" fill="#c0c0c0"/></svg>
<div class="t" style="left:75px;top:977.57px;font-size:13.5px;color:#000;letter-spacing:0.12px;">Prepare batch calculation</div>
<div style="position:absolute;left:10px;top:1008px;width:254px;height:15px;background:#fff;border-top:1px solid #d6d6d6;box-sizing:border-box;"></div>
<div style="position:absolute;left:11px;top:1009px;width:252px;height:13px;border-radius:7px;background:linear-gradient(90deg,#f0f0f0,#fafafa);border:1px solid #d8d8d8;box-sizing:border-box;"></div>
<div style="position:absolute;left:22px;top:1011px;width:230px;height:9px;border-radius:5px;background:linear-gradient(#dedede,#d0d0d0);border:1px solid #9c9c9c;box-sizing:border-box;"></div>
<div style="position:absolute;left:256px;top:1014px;width:1px;height:1px;background:#555;"></div>
<div style="position:absolute;left:0px;top:1033px;width:1920px;height:1px;background:#b8b8b8;"></div>
<div style="position:absolute;left:0px;top:1034px;width:1920px;height:1px;background:#dcdcdc;"></div>
<div style="position:absolute;left:289px;top:265px;width:1622px;height:759px;box-sizing:border-box;border:1px solid #8c8c8c;border-right-color:#fafafa;border-bottom-color:#fafafa;"></div>
<div class="t" style="left:299px;top:278.57px;font-size:13.5px;color:#333;font-weight:bold;">Boundary conditions</div>
<div style="position:absolute;left:1896px;top:267px;width:13px;height:756px;border-radius:7px;background:linear-gradient(90deg,#ececec,#fafafa);border:1px solid #dcdcdc;box-sizing:border-box;"></div>
<div style="position:absolute;left:1898px;top:278px;width:9px;height:667px;border-radius:5px;background:linear-gradient(90deg,#d0d0d0,#dedede);border:1px solid #9c9c9c;box-sizing:border-box;"></div>
<div style="position:absolute;left:1902px;top:1015px;width:1px;height:1px;background:#444;"></div>
<div style="position:absolute;left:316px;top:300px;width:1562px;height:192px;box-sizing:border-box;border:1px solid #8c8c8c;border-right-color:#f0f0f0;border-bottom-color:#f0f0f0;background:#fff;"></div>
<div style="position:absolute;left:317px;top:301px;width:1559px;height:24px;background:linear-gradient(#e4e4e4 0px,#f6f6f6 5px,#ffffff 11px,#ffffff);"></div>
<div style="position:absolute;left:1875px;top:301px;width:1px;height:24px;background:#c4c4c4;"></div>
<div style="position:absolute;left:317px;top:325px;width:1559px;height:1px;background:#a9a9a9;"></div>
<div style="position:absolute;left:416px;top:301px;width:1px;height:24px;background:#d9d9d9;"></div>
<div style="position:absolute;left:516px;top:301px;width:1px;height:24px;background:#d9d9d9;"></div>
<div style="position:absolute;left:616px;top:301px;width:1px;height:24px;background:#d9d9d9;"></div>
<div class="t" style="left:321px;top:307.00px;font-size:13px;color:#000;">Label</div>
<div class="t" style="left:421px;top:307.00px;font-size:13px;color:#000;">Zone</div>
<div class="t" style="left:521px;top:307.00px;font-size:13px;color:#000;">Nature</div>
<div class="t" style="left:621px;top:307.00px;font-size:13px;color:#000;">Selection criteria</div>
<div style="position:absolute;left:317px;top:326px;width:1560px;height:19px;background:#fcfcfc;"></div>
<div class="t" style="left:320px;top:329.00px;font-size:13px;color:#000;">anode</div>
<div class="t" style="left:420px;top:329.00px;font-size:13px;color:#000;">1</div>
<div class="t" style="left:520px;top:329.00px;font-size:13px;color:#000;">outlet</div>
<div class="t" style="left:620px;top:329.00px;font-size:13px;color:#000;">anode</div>
<div style="position:absolute;left:317px;top:345px;width:1560px;height:19px;background:#ebebeb;"></div>
<div class="t" style="left:320px;top:348.00px;font-size:13px;color:#000;">BC_2</div>
<div class="t" style="left:420px;top:348.00px;font-size:13px;color:#000;">2</div>
<div class="t" style="left:520px;top:348.00px;font-size:13px;color:#000;">outlet</div>
<div class="t" style="left:620px;top:348.00px;font-size:13px;color:#000;">anode_face</div>
<div style="position:absolute;left:317px;top:364px;width:1560px;height:19px;background:#fcfcfc;"></div>
<div class="t" style="left:320px;top:367.00px;font-size:13px;color:#000;">cathode</div>
<div class="t" style="left:420px;top:367.00px;font-size:13px;color:#000;">3</div>
<div class="t" style="left:520px;top:367.00px;font-size:13px;color:#000;">wall</div>
<div class="t" style="left:620px;top:367.00px;font-size:13px;color:#000;">cathode</div>
<div style="position:absolute;left:317px;top:383px;width:1560px;height:19px;background:#ebebeb;"></div>
<div class="t" style="left:320px;top:386.00px;font-size:13px;color:#000;">BC_4</div>
<div class="t" style="left:420px;top:386.00px;font-size:13px;color:#000;">4</div>
<div class="t" style="left:520px;top:386.00px;font-size:13px;color:#000;">wall</div>
<div class="t" style="left:620px;top:386.00px;font-size:13px;color:#000;">cathode_face</div>
<div style="position:absolute;left:317px;top:402px;width:1560px;height:19px;background:linear-gradient(#97afca 0px,#a2b8d0 1px,#a0b6ce 50%,#8ea7c4 100%);"></div>
<div class="t" style="left:320px;top:405.00px;font-size:13px;color:#f4f7fa;">inlet</div>
<div class="t" style="left:420px;top:405.00px;font-size:13px;color:#f4f7fa;">5</div>
<div class="t" style="left:520px;top:405.00px;font-size:13px;color:#f4f7fa;">inlet</div>
<div class="t" style="left:620px;top:405.00px;font-size:13px;color:#f4f7fa;">inlet</div>
<div style="position:absolute;left:317px;top:421px;width:1560px;height:19px;background:#ebebeb;"></div>
<div class="t" style="left:320px;top:424.00px;font-size:13px;color:#000;">outlet</div>
<div class="t" style="left:420px;top:424.00px;font-size:13px;color:#000;">6</div>
<div class="t" style="left:520px;top:424.00px;font-size:13px;color:#000;">outlet</div>
<div class="t" style="left:620px;top:424.00px;font-size:13px;color:#000;">outlet</div>
<div style="position:absolute;left:317px;top:440px;width:1560px;height:19px;background:#fcfcfc;"></div>
<div class="t" style="left:320px;top:443.00px;font-size:13px;color:#000;">walls</div>
<div class="t" style="left:420px;top:443.00px;font-size:13px;color:#000;">7</div>
<div class="t" style="left:520px;top:443.00px;font-size:13px;color:#000;">wall</div>
<div class="t" style="left:620px;top:443.00px;font-size:13px;color:#000;">walls</div>
<div class="t" style="left:325px;top:510.57px;font-size:13.5px;color:#333;font-weight:bold;">Velocity</div>
<div style="position:absolute;left:655px;top:534px;width:190px;height:25px;box-sizing:border-box;border:1px solid #969696;border-top-color:#a2a2a2;border-bottom-color:#858585;border-radius:3px;background:linear-gradient(#f2f2f2 0px,#e6e6e6 2px,#dadada 60%,#d0d0d0);box-shadow:0 1px 1px rgba(0,0,0,.10), inset 1px 0 0 rgba(255,255,255,.35), inset -1px 0 0 rgba(255,255,255,.35);"></div>
<div class="t" style="left:660px;top:540.00px;font-size:13px;color:#404040;">norm</div>
<svg style="position:absolute;left:834px;top:543px;" width="6" height="12" viewBox="0 0 6 12"><path d="M0 3 L3 0 L6 3z M0 9 L3 12 L6 9z" fill="#505050"/></svg>
<div style="position:absolute;left:853px;top:534px;width:304px;height:25px;box-sizing:border-box;background:#fbfbfb;border:1px solid #9a9a9a;border-top-color:#7e7e7e;border-bottom-color:#b4b4b4;border-radius:3px;box-shadow:0 1px 0 #e2e2e2;"></div>
<div class="t" style="left:858px;top:540.00px;font-size:13px;color:#000;">1.0</div>
<div class="t" style="left:1164px;top:540.00px;font-size:13px;color:#0a0a0a;">m/s</div>
<div class="t" style="left:654px;top:576.00px;font-size:13px;color:#0a0a0a;letter-spacing:0.4px;">Direction</div>
<div style="position:absolute;left:853px;top:570px;width:304px;height:25px;box-sizing:border-box;border:1px solid #969696;border-top-color:#a2a2a2;border-bottom-color:#858585;border-radius:3px;background:linear-gradient(#f2f2f2 0px,#e6e6e6 2px,#dadada 60%,#d0d0d0);box-shadow:0 1px 1px rgba(0,0,0,.10), inset 1px 0 0 rgba(255,255,255,.35), inset -1px 0 0 rgba(255,255,255,.35);"></div>
<div class="t" style="left:858px;top:576.00px;font-size:13px;color:#404040;letter-spacing:0.4px;">normal direction to the inlet</div>
<svg style="position:absolute;left:1146px;top:579px;" width="6" height="12" viewBox="0 0 6 12"><path d="M0 3 L3 0 L6 3z M0 9 L3 12 L6 9z" fill="#505050"/></svg>
<div style="position:absolute;left:1506px;top:533px;width:40px;height:28px;box-sizing:border-box;border:1px solid #b2b2b2;border-bottom-color:#a8a8a8;border-radius:3px;background:linear-gradient(#cfcfcf,#c6c6c6);box-shadow:0 1px 0 #e0e0e0;"></div>
<svg style="position:absolute;left:1514px;top:536px;" width="24" height="20" viewBox="0 0 24 20"><rect x="3.5" y="1.5" width="14" height="17" rx="1" fill="#ececec" stroke="#b4b4b4" stroke-width="1"/><path d="M11 5h4 M11 7.5h4" stroke="#d4d4d4"/><path d="M4.8 9.2 L1.5 12.5" stroke="#b6b6b6" stroke-width="3.2"/><circle cx="8" cy="6" r="4.4" fill="#c3c3c3" stroke="#a8a8a8" stroke-width="1"/><circle cx="7" cy="5" r="1.8" fill="#d8d8d8"/><path d="M11 16 L21.5 5.2" stroke="#9a9a9a" stroke-width="3.2" stroke-linecap="round"/><path d="M11 16 L21.5 5.2" stroke="#e4e4e4" stroke-width="1.4"/><path d="M10 17.2 L11.8 15.4" stroke="#777" stroke-width="1.8"/></svg>
<div style="position:absolute;left:1506px;top:569px;width:40px;height:28px;box-sizing:border-box;border:1px solid #b2b2b2;border-bottom-color:#a8a8a8;border-radius:3px;background:linear-gradient(#cfcfcf,#c6c6c6);box-shadow:0 1px 0 #e0e0e0;"></div>
<svg style="position:absolute;left:1514px;top:572px;" width="24" height="20" viewBox="0 0 24 20"><rect x="3.5" y="1.5" width="14" height="17" rx="1" fill="#ececec" stroke="#b4b4b4" stroke-width="1"/><path d="M11 5h4 M11 7.5h4" stroke="#d4d4d4"/><path d="M4.8 9.2 L1.5 12.5" stroke="#b6b6b6" stroke-width="3.2"/><circle cx="8" cy="6" r="4.4" fill="#c3c3c3" stroke="#a8a8a8" stroke-width="1"/><circle cx="7" cy="5" r="1.8" fill="#d8d8d8"/><path d="M11 16 L21.5 5.2" stroke="#9a9a9a" stroke-width="3.2" stroke-linecap="round"/><path d="M11 16 L21.5 5.2" stroke="#e4e4e4" stroke-width="1.4"/><path d="M10 17.2 L11.8 15.4" stroke="#777" stroke-width="1.8"/></svg>
<div class="t" style="left:325px;top:636.57px;font-size:13.5px;color:#333;font-weight:bold;">Electric Potential</div>
<div style="position:absolute;left:694px;top:678px;width:97px;height:25px;box-sizing:border-box;border:1px solid #969696;border-top-color:#a2a2a2;border-bottom-color:#858585;border-radius:3px;background:linear-gradient(#f2f2f2 0px,#e6e6e6 2px,#dadada 60%,#d0d0d0);box-shadow:0 1px 1px rgba(0,0,0,.10), inset 1px 0 0 rgba(255,255,255,.35), inset -1px 0 0 rgba(255,255,255,.35);"></div>
<div class="t" style="left:699px;top:684.00px;font-size:13px;color:#404040;">PotElecReal</div>
<svg style="position:absolute;left:780px;top:687px;" width="6" height="12" viewBox="0 0 6 12"><path d="M0 3 L3 0 L6 3z M0 9 L3 12 L6 9z" fill="#505050"/></svg>
<div style="position:absolute;left:798px;top:658px;width:1px;height:65px;background:#7a7a7a;"></div>
<div style="position:absolute;left:799px;top:659px;width:1px;height:64px;background:#f8f8f8;"></div>
<div style="position:absolute;left:799px;top:658px;width:1px;height:1px;background:#8a8a8a;"></div>
<div class="t" style="left:1158px;top:667.00px;font-size:13px;color:#0a0a0a;">Type</div>
<div class="t" style="left:1158px;top:703.00px;font-size:13px;color:#0a0a0a;">Value</div>
<div style="position:absolute;left:1435px;top:660px;width:72px;height:29px;box-sizing:border-box;border:1px solid #b2b2b2;border-bottom-color:#a8a8a8;border-radius:3px;background:linear-gradient(#cfcfcf,#c6c6c6);box-shadow:0 1px 0 #e0e0e0;"></div>
<svg style="position:absolute;left:1459px;top:663px;" width="24" height="20" viewBox="0 0 24 20"><rect x="3.5" y="1.5" width="14" height="17" rx="1" fill="#ececec" stroke="#b4b4b4" stroke-width="1"/><path d="M11 5h4 M11 7.5h4" stroke="#d4d4d4"/><path d="M4.8 9.2 L1.5 12.5" stroke="#b6b6b6" stroke-width="3.2"/><circle cx="8" cy="6" r="4.4" fill="#c3c3c3" stroke="#a8a8a8" stroke-width="1"/><circle cx="7" cy="5" r="1.8" fill="#d8d8d8"/><path d="M11 16 L21.5 5.2" stroke="#9a9a9a" stroke-width="3.2" stroke-linecap="round"/><path d="M11 16 L21.5 5.2" stroke="#e4e4e4" stroke-width="1.4"/><path d="M10 17.2 L11.8 15.4" stroke="#777" stroke-width="1.8"/></svg>
<div style="position:absolute;left:1350px;top:697px;width:157px;height:25px;box-sizing:border-box;background:#fbfbfb;border:1px solid #9a9a9a;border-top-color:#7e7e7e;border-bottom-color:#b4b4b4;border-radius:3px;box-shadow:0 1px 0 #e2e2e2;"></div>
<div class="t" style="left:325px;top:743.57px;font-size:13.5px;color:#333;font-weight:bold;">Vector Potential</div>
<div style="position:absolute;left:695px;top:778px;width:93px;height:25px;box-sizing:border-box;border:1px solid #969696;border-top-color:#a2a2a2;border-bottom-color:#858585;border-radius:3px;background:linear-gradient(#f2f2f2 0px,#e6e6e6 2px,#dadada 60%,#d0d0d0);box-shadow:0 1px 1px rgba(0,0,0,.10), inset 1px 0 0 rgba(255,255,255,.35), inset -1px 0 0 rgba(255,255,255,.35);"></div>
<div class="t" style="left:700px;top:784.00px;font-size:13px;color:#404040;letter-spacing:-0.85px;">POT_VEC01</div>
<svg style="position:absolute;left:777px;top:787px;" width="6" height="12" viewBox="0 0 6 12"><path d="M0 3 L3 0 L6 3z M0 9 L3 12 L6 9z" fill="#505050"/></svg>
<div style="position:absolute;left:795px;top:765px;width:1px;height:52px;background:#7a7a7a;"></div>
<div style="position:absolute;left:796px;top:766px;width:1px;height:51px;background:#f8f8f8;"></div>
<div style="position:absolute;left:796px;top:765px;width:1px;height:1px;background:#8a8a8a;"></div>
<div class="t" style="left:1157px;top:775.00px;font-size:13px;color:#0a0a0a;">Type</div>
<div style="position:absolute;left:1238px;top:768px;width:188px;height:25px;box-sizing:border-box;border:1px solid #969696;border-top-color:#a2a2a2;border-bottom-color:#858585;border-radius:3px;background:linear-gradient(#f2f2f2 0px,#e6e6e6 2px,#dadada 60%,#d0d0d0);box-shadow:0 1px 1px rgba(0,0,0,.10), inset 1px 0 0 rgba(255,255,255,.35), inset -1px 0 0 rgba(255,255,255,.35);"></div>
<div class="t" style="left:1243px;top:774.00px;font-size:13px;color:#404040;letter-spacing:0.18px;">Prescribed value  (user law)</div>
<svg style="position:absolute;left:1415px;top:777px;" width="6" height="12" viewBox="0 0 6 12"><path d="M0 3 L3 0 L6 3z M0 9 L3 12 L6 9z" fill="#505050"/></svg>
<div style="position:absolute;left:1434px;top:766px;width:72px;height:30px;box-sizing:border-box;border:1px solid #9a9a9a;border-top-color:#a6a6a6;border-bottom-color:#858585;border-radius:3px;background:linear-gradient(#f2f2f2 0px,#e8e8e8 2px,#d8d8d8);box-shadow:0 1px 1px rgba(0,0,0,.12);"></div>
<svg style="position:absolute;left:1458px;top:770px;" width="24" height="20" viewBox="0 0 24 20"><rect x="3.5" y="1.5" width="14" height="17" rx="1" fill="#f6f6f6" stroke="#8e8e8e" stroke-width="1"/><path d="M11 5h4 M11 7.5h4" stroke="#c8c8c8"/><path d="M4.5 9.5 L1.5 12.5" stroke="#8a8a8a" stroke-width="2.6"/><circle cx="8" cy="6" r="4.4" fill="#a9c7ec" stroke="#8aa2bd" stroke-width="1"/><path d="M11 16 L21.5 5.2" stroke="#8a5a12" stroke-width="3.6" stroke-linecap="round"/><path d="M11 16 L21.5 5.2" stroke="#e9bd62" stroke-width="2"/><path d="M10 17.2 L11.8 15.4" stroke="#111" stroke-width="2"/></svg>
<div class="t" style="left:325px;top:837.57px;font-size:13.5px;color:#333;font-weight:bold;">Thermal</div>
<div style="position:absolute;left:699px;top:889px;width:80px;height:25px;box-sizing:border-box;border:1px solid #969696;border-top-color:#a2a2a2;border-bottom-color:#858585;border-radius:3px;background:linear-gradient(#f2f2f2 0px,#e6e6e6 2px,#dadada 60%,#d0d0d0);box-shadow:0 1px 1px rgba(0,0,0,.10), inset 1px 0 0 rgba(255,255,255,.35), inset -1px 0 0 rgba(255,255,255,.35);"></div>
<div class="t" style="left:704px;top:895.00px;font-size:13px;color:#404040;">Enthalpy</div>
<svg style="position:absolute;left:768px;top:898px;" width="6" height="12" viewBox="0 0 6 12"><path d="M0 3 L3 0 L6 3z M0 9 L3 12 L6 9z" fill="#505050"/></svg>
<div style="position:absolute;left:786px;top:859px;width:1px;height:85px;background:#7a7a7a;"></div>
<div style="position:absolute;left:787px;top:860px;width:1px;height:84px;background:#f8f8f8;"></div>
<div style="position:absolute;left:787px;top:859px;width:1px;height:1px;background:#8a8a8a;"></div>
<div class="t" style="left:1150px;top:868.00px;font-size:13px;color:#0a0a0a;">Type</div>
<div style="position:absolute;left:1233px;top:862px;width:188px;height:25px;box-sizing:border-box;border:1px solid #969696;border-top-color:#a2a2a2;border-bottom-color:#858585;border-radius:3px;background:linear-gradient(#f2f2f2 0px,#e6e6e6 2px,#dadada 60%,#d0d0d0);box-shadow:0 1px 1px rgba(0,0,0,.10), inset 1px 0 0 rgba(255,255,255,.35), inset -1px 0 0 rgba(255,255,255,.35);"></div>
<div class="t" style="left:1238px;top:868.00px;font-size:13px;color:#404040;letter-spacing:0.2px;">Prescribed value</div>
<svg style="position:absolute;left:1410px;top:871px;" width="6" height="12" viewBox="0 0 6 12"><path d="M0 3 L3 0 L6 3z M0 9 L3 12 L6 9z" fill="#505050"/></svg>
<div style="position:absolute;left:1429px;top:860px;width:75px;height:30px;box-sizing:border-box;border:1px solid #b2b2b2;border-bottom-color:#a8a8a8;border-radius:3px;background:linear-gradient(#cfcfcf,#c6c6c6);box-shadow:0 1px 0 #e0e0e0;"></div>
<svg style="position:absolute;left:1454px;top:864px;" width="24" height="20" viewBox="0 0 24 20"><rect x="3.5" y="1.5" width="14" height="17" rx="1" fill="#ececec" stroke="#b4b4b4" stroke-width="1"/><path d="M11 5h4 M11 7.5h4" stroke="#d4d4d4"/><path d="M4.8 9.2 L1.5 12.5" stroke="#b6b6b6" stroke-width="3.2"/><circle cx="8" cy="6" r="4.4" fill="#c3c3c3" stroke="#a8a8a8" stroke-width="1"/><circle cx="7" cy="5" r="1.8" fill="#d8d8d8"/><path d="M11 16 L21.5 5.2" stroke="#9a9a9a" stroke-width="3.2" stroke-linecap="round"/><path d="M11 16 L21.5 5.2" stroke="#e4e4e4" stroke-width="1.4"/><path d="M10 17.2 L11.8 15.4" stroke="#777" stroke-width="1.8"/></svg>
<div class="t" style="left:1150px;top:904.00px;font-size:13px;color:#0a0a0a;">Value</div>
<div style="position:absolute;left:1349px;top:898px;width:154px;height:25px;box-sizing:border-box;background:#fbfbfb;border:1px solid #9a9a9a;border-top-color:#7e7e7e;border-bottom-color:#b4b4b4;border-radius:3px;box-shadow:0 1px 0 #e2e2e2;"></div>
<div class="t" style="left:1354px;top:904.00px;font-size:13px;color:#000;">0.0</div>
<div style="position:absolute;left:1233px;top:663px;width:202px;height:108px;background:rgba(0,0,0,.22);filter:blur(3px);"></div>
<div style="position:absolute;left:1238px;top:660px;width:193px;height:107px;box-sizing:border-box;border:1px solid #3a3a3a;background:#666;"></div>
<div style="position:absolute;left:1239px;top:661px;width:191px;height:21px;background:#3a3a3a;"></div>
<div class="t" style="left:1245px;top:665.00px;font-size:13px;color:#f6f6f6;letter-spacing:0.3px;">Prescribed value</div>
<div class="t" style="left:1245px;top:686.00px;font-size:13px;color:#9c9c9c;letter-spacing:0.3px;">Prescribed value  (user law)</div>
<div class="t" style="left:1245px;top:707.00px;font-size:13px;color:#f6f6f6;letter-spacing:0.3px;">Prescribed flux</div>
<div class="t" style="left:1245px;top:728.00px;font-size:13px;color:#9c9c9c;letter-spacing:0.3px;">Prescribed flux  (user law)</div>
<div class="t" style="left:1245px;top:749.00px;font-size:13px;color:#f6f6f6;letter-spacing:0.3px;">Implicit value (dpot)</div>
<svg style="position:absolute;left:1581px;top:638px;" width="14" height="21" viewBox="0 0 14 21"><path d="M1.5 1.5 V18.5 L5.3 14.8 L8 20 L10.5 19 L7.9 13.6 H13z" fill="#fff" stroke="#000" stroke-width="1.3" stroke-linejoin="round"/></svg>
<div style="position:absolute;left:0px;top:1055px;width:1920px;height:25px;background:#484848;"></div>
<div style="position:absolute;left:232px;top:1056px;width:1200px;height:24px;background:linear-gradient(#515151,#4a4a4a 40%,#474747);"></div>
<div style="position:absolute;left:32px;top:1056px;width:200px;height:24px;background:#393939;"></div>
<svg style="position:absolute;left:1px;top:1059px;" width="23" height="18" viewBox="0 0 23 18"><rect x="1" y="1" width="21" height="3" fill="#e8e8e8"/><rect x="1" y="4" width="21" height="13" fill="#5f84b0"/><rect x="4" y="12" width="15" height="4" fill="#2e4c70"/></svg>
<svg style="position:absolute;left:35px;top:1061px;" width="14" height="14" viewBox="0 0 14 14"><rect x=".5" y=".5" width="13" height="13" fill="#eee" stroke="#2d4f86"/><rect x="1" y="1" width="12" height="2.5" fill="#3a64a8"/></svg>
<div class="t" style="left:57px;top:1062.83px;font-size:12.6px;color:#e2e2e2;">1026.XML - Code_Saturne G...</div>
<div class="t" style="left:255px;top:1062.37px;font-size:13.15px;color:#e2e2e2;">How to Take a Screenshot i...</div>
<div class="t" style="left:455px;top:1062.24px;font-size:13.3px;color:#e2e2e2;">[cs_user_boundary_conditio...</div>
<div class="t" style="left:655px;top:1062.24px;font-size:13.3px;color:#e2e2e2;">[cs_user_boundary_conditio...</div>
<div class="t" style="left:855px;top:1062.54px;font-size:12.95px;color:#e2e2e2;">[Salome-Meca 2013.1 - [Stu...</div>
<div class="t" style="left:1055px;top:1062.88px;font-size:12.55px;color:#e2e2e2;">[SRC - File Manager]</div>
<div class="t" style="left:1255px;top:1062.66px;font-size:12.8px;color:#e2e2e2;">[cs_plasma - File Manager]</div>
<svg style="position:absolute;left:232px;top:1059px;" width="18" height="18" viewBox="0 0 18 18"><defs><radialGradient id="ffg" cx="55%" cy="30%" r="60%"><stop offset="0" stop-color="#aef0ff"/><stop offset=".5" stop-color="#3a8ad6"/><stop offset="1" stop-color="#0a2f86"/></radialGradient><linearGradient id="ffo" x1="0" y1="0" x2="1" y2="1"><stop offset="0" stop-color="#f07a1a"/><stop offset=".6" stop-color="#d8501a"/><stop offset="1" stop-color="#f8b820"/></linearGradient></defs><circle cx="9.5" cy="8" r="6.2" fill="url(#ffg)"/><path d="M3 2.8 C1 6 1 12 5 15 C9 18 15 17 16.5 12 C17.5 8.5 16.5 5.5 14.5 3.5 C15.5 7 14 11 10.5 12.2 C7.5 13 5 11.5 4.8 9 C4.6 7.5 6 6 7.8 6.2 C6.5 4.5 4.8 4.2 3 2.8z" fill="url(#ffo)"/></svg>
<svg style="position:absolute;left:435px;top:1060px;" width="14" height="16" viewBox="0 0 14 16"><rect x=".5" y=".5" width="12" height="15" fill="#888" stroke="#666"/><path d="M5 12 L11 6" stroke="#ddd" stroke-width="1.5"/></svg>
<svg style="position:absolute;left:635px;top:1060px;" width="14" height="16" viewBox="0 0 14 16"><rect x=".5" y=".5" width="12" height="15" fill="#888" stroke="#666"/><path d="M5 12 L11 6" stroke="#ddd" stroke-width="1.5"/></svg>
<svg style="position:absolute;left:832px;top:1062px;" width="18" height="11" viewBox="0 0 18 11"><path d="M1 4.3 h8" stroke="#a8841e" stroke-width="1.6"/><ellipse cx="9" cy="4.5" rx="3.2" ry="1.6" fill="#b8922a"/><circle cx="9" cy="4.3" r=".9" fill="#d8c8a0"/><path d="M12 4.5 L15 3.3" stroke="#7a6018" stroke-width="1.2"/><circle cx="15.5" cy="3.2" r="1.2" fill="none" stroke="#8a6c1c" stroke-width=".8"/><path d="M9 6 L8.8 8.5 L7.2 9.6 H10.8 L9.4 8.5z" fill="#a8841e"/></svg>
<svg style="position:absolute;left:1033px;top:1060px;" width="16" height="15" viewBox="0 0 16 15"><path d="M1 2 h5 l1.5 1.5 h7.5 v10.5 h-14z" fill="#5d708a"/><rect x="1" y="5" width="14" height="9" fill="#7d90a8"/></svg>
<svg style="position:absolute;left:1233px;top:1060px;" width="16" height="15" viewBox="0 0 16 15"><path d="M1 2 h5 l1.5 1.5 h7.5 v10.5 h-14z" fill="#5d708a"/><rect x="1" y="5" width="14" height="9" fill="#7d90a8"/></svg>
<div style="position:absolute;left:1816px;top:1057px;width:39px;height:23px;background:#333;"></div>
<div style="position:absolute;left:1856px;top:1057px;width:39px;height:1px;background:#3b5f8e;"></div>
<div style="position:absolute;left:1856px;top:1058px;width:39px;height:22px;background:#a6bcd6;border:1px solid #f2f2f2;box-sizing:border-box;"></div>
<svg style="position:absolute;left:1868px;top:1062px;" width="15" height="13" viewBox="0 0 15 13"><rect x=".5" y=".5" width="14" height="12" fill="#e2e4e0" stroke="#747474"/><rect x="1" y="1" width="13" height="2.2" fill="#1f4f9e"/><rect x="1.5" y="3.2" width="12" height="8.8" fill="none" stroke="#fff" stroke-width=".8"/></svg>
<svg style="position:absolute;left:1900px;top:1057px;" width="16" height="23" viewBox="0 0 16 23"><defs><linearGradient id="tr" x1="0" y1="0" x2="1" y2="0"><stop offset="0" stop-color="#8a8a8a"/><stop offset=".35" stop-color="#e8e8e8"/><stop offset=".6" stop-color="#a8a8a8"/><stop offset="1" stop-color="#6a6a6a"/></linearGradient></defs><path d="M1 4 L2 19.5 Q8 22.5 14 19.5 L15 4z" fill="url(#tr)"/><ellipse cx="8" cy="4" rx="7" ry="2.6" fill="#d8d8d8" stroke="#8a8a8a" stroke-width=".6"/><ellipse cx="8" cy="4.2" rx="4.5" ry="1.4" fill="#444"/><path d="M6.5 6 h3 v6 l-1.5 -1.5 l-1.5 1.5z" fill="#3d8fd8"/></svg>
</body></html>
